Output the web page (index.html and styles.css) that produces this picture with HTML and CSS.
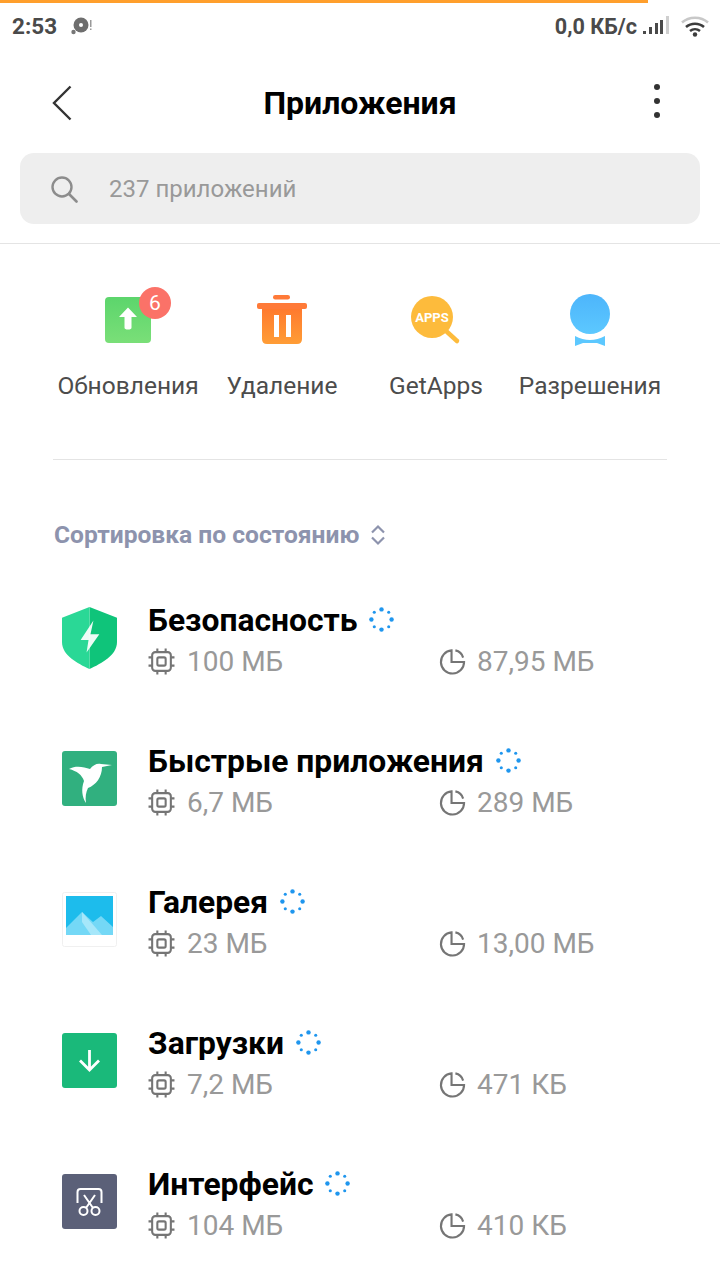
FILE: index.html
```html
<!DOCTYPE html>
<html lang="ru">
<head>
    <meta charset="UTF-8">
    <title>Приложения</title>
    <link rel="stylesheet" href="styles.css">
</head>
<body>
    <svg class="defs" width="0" height="0">
        <symbol id="chip" viewBox="0 0 26 26">
            <g fill="none" stroke="#757575" stroke-width="2">
                <rect x="4" y="4" width="18" height="18" rx="3"/>
                <rect x="9" y="9" width="8" height="8" rx="1.5"/>
                <path d="M9 0.5V4M17 0.5V4M9 22V25.500M17 22V25.500M0.500 9H4M0.500 17H4M22 9H25.500M22 17H25.500"/>
            </g>
        </symbol>
        <symbol id="pie" viewBox="0 0 28 28">
            <path d="M13 2.500A12 12 0 1 0 26 14.500H13Z M17 2.500A10.500 10.500 0 0 1 25 10" fill="none" stroke="#757575" stroke-width="2.200"/>
        </symbol>
        <symbol id="spinner" viewBox="0 0 26 26">
            <g fill="#1f96ee">
                <circle cx="13" cy="2.500" r="2.300"/>
                <circle cx="20.500" cy="5.500" r="1.600"/>
                <circle cx="23.500" cy="13" r="2.300"/>
                <circle cx="20.500" cy="20.500" r="1.600"/>
                <circle cx="13" cy="23.500" r="2.300"/>
                <circle cx="5.500" cy="20.500" r="1.600"/>
                <circle cx="2.500" cy="13" r="2.300"/>
                <circle cx="5.500" cy="5.500" r="1.600"/>
            </g>
        </symbol>
    </svg>

    <div class="progress"></div>

    <div class="statusbar">
        <div class="status-left">
            <span class="clock">2:53</span>
            <svg width="24" height="22" viewBox="0 0 24 22">
                <circle cx="11" cy="10" r="7.500" fill="#6e6e6e"/>
                <circle cx="11" cy="10" r="2" fill="#fff"/>
                <circle cx="3.500" cy="17" r="2.200" fill="#777"/>
                <rect x="20" y="5" width="1.500" height="7" fill="#999"/>
                <rect x="20" y="13.500" width="1.500" height="1.500" fill="#999"/>
            </svg>
        </div>
        <div class="status-right">
            <span class="speed">0,0 КБ/с</span>
            <svg class="signal" width="26" height="20" viewBox="0 0 26 20">
                <rect x="0" y="15" width="3" height="3" fill="#4a4a4a"/>
                <rect x="6" y="11" width="3" height="7" fill="#4a4a4a"/>
                <rect x="12" y="7" width="3" height="11" fill="#4a4a4a"/>
                <rect x="17" y="4" width="3" height="14" fill="#4a4a4a"/>
                <rect x="23" y="0" width="3" height="18" fill="#cfcfcf"/>
            </svg>
            <svg class="wifi" width="28" height="22" viewBox="0 0 28 22">
                <path d="M1 7.500C8 1 20 1 27 7.500" fill="none" stroke="#c8c8c8" stroke-width="2.500"/>
                <path d="M5 12C10 7.500 18 7.500 23 12" fill="none" stroke="#3c3c3c" stroke-width="2.500"/>
                <path d="M9 16C12 13.500 16 13.500 19 16" fill="none" stroke="#3c3c3c" stroke-width="2.500"/>
                <circle cx="14" cy="19.500" r="2.200" fill="#3c3c3c"/>
            </svg>
        </div>
    </div>

    <header class="titlebar">
        <svg class="back" width="20" height="36" viewBox="0 0 20 36">
            <path d="M18.500 1.500L2 18L18.500 34.500" fill="none" stroke="#333" stroke-width="2.400"/>
        </svg>
        <h1>Приложения</h1>
        <div class="more"><i></i><i></i><i></i></div>
    </header>

    <div class="search">
        <svg width="28" height="28" viewBox="0 0 28 28">
            <circle cx="12" cy="12" r="9.500" fill="none" stroke="#8c8c8c" stroke-width="2.400"/>
            <path d="M19 19L26.500 26.500" stroke="#8c8c8c" stroke-width="2.600" stroke-linecap="round"/>
        </svg>
        <span>237 приложений</span>
    </div>

    <nav class="actions">
        <div class="action">
            <div class="action-icon">
                <svg width="48" height="48" viewBox="0 0 48 48">
                    <defs>
                        <linearGradient id="gUp" x1="0" y1="0" x2="0" y2="1"><stop offset="0" stop-color="#5cd56c"/><stop offset="1" stop-color="#7adf78"/></linearGradient>
                    </defs>
                    <rect x="1" y="1" width="46" height="46" rx="4" fill="url(#gUp)"/>
                    <path d="M24 11.500L33 21H27.500V31.500Q27.500 33.500 24 33.500Q20.500 33.500 20.500 31.500V21H15Z" fill="#fff"/>
                </svg>
                <span class="badge">6</span>
            </div>
            <span class="action-label">Обновления</span>
        </div>
        <div class="action">
            <div class="action-icon">
                <svg width="50" height="50" viewBox="0 0 50 50">
                    <defs>
                        <linearGradient id="gBin" x1="0" y1="0" x2="0" y2="1"><stop offset="0" stop-color="#ff7a2e"/><stop offset="1" stop-color="#ff9d36"/></linearGradient>
                    </defs>
                    <rect x="16" y="0" width="17" height="4.500" rx="2.200" fill="#ff7a38"/>
                    <rect x="0" y="8" width="50" height="6" rx="2" fill="#ff7a38"/>
                    <path d="M5 14H45V44Q45 49 40 49H10Q5 49 5 44Z" fill="url(#gBin)"/>
                    <rect x="17" y="20" width="5" height="22" fill="#fff"/>
                    <rect x="29" y="20" width="5" height="22" fill="#fff"/>
                </svg>
            </div>
            <span class="action-label">Удаление</span>
        </div>
        <div class="action">
            <div class="action-icon">
                <svg width="50" height="50" viewBox="0 0 50 50">
                    <path d="M34 35L46 46" stroke="#fdbb3c" stroke-width="4.500" stroke-linecap="round"/>
                    <circle cx="21" cy="22" r="21" fill="#fdbb3c"/>
                    <text class="apps" x="21" y="27">APPS</text>
                </svg>
            </div>
            <span class="action-label">GetApps</span>
        </div>
        <div class="action">
            <div class="action-icon">
                <svg width="42" height="52" viewBox="0 0 42 52">
                    <defs>
                        <linearGradient id="gPerm" x1="0" y1="0" x2="0" y2="1"><stop offset="0" stop-color="#4db5fb"/><stop offset="1" stop-color="#5cc8ff"/></linearGradient>
                    </defs>
                    <circle cx="21" cy="20" r="20" fill="url(#gPerm)"/>
                    <path d="M6 42Q21 50 36 42V52L28 49H14L6 52Z" fill="#5cc8ff"/>
                </svg>
            </div>
            <span class="action-label">Разрешения</span>
        </div>
    </nav>

    <div class="sort">
        <span>Сортировка по состоянию</span>
        <svg width="16" height="22" viewBox="0 0 16 22">
            <path d="M2 8.500L8 2.500L14 8.500M2 13.500L8 19.500L14 13.500" fill="none" stroke="#8d93ad" stroke-width="2.200"/>
        </svg>
    </div>

    <ul class="apps-list">
        <li class="app">
            <svg class="app-icon" width="55" height="62" viewBox="0 0 56 64" preserveAspectRatio="none">
                <path d="M28 0L56 11V36C56 50 40 58 28 64Z" fill="#0fc47a"/>
                <path d="M28 0L0 11V36C0 50 16 58 28 64Z" fill="#2ad896"/>
                <path d="M32 14L19 34H27L25 47L38 28H29Z" fill="#fff" opacity=".92"/>
            </svg>
            <div class="app-body">
                <div class="app-name"><span>Безопасность</span><svg width="25" height="25"><use href="#spinner"/></svg></div>
                <div class="app-stats">
                    <div class="stat"><svg width="27" height="27"><use href="#chip"/></svg><span>100 МБ</span></div>
                    <div class="stat"><svg width="27" height="27"><use href="#pie"/></svg><span>87,95 МБ</span></div>
                </div>
            </div>
        </li>
        <li class="app">
            <svg class="app-icon" width="55" height="55" viewBox="0 0 55 55">
                <rect width="55" height="55" rx="3" fill="#31b07f"/>
                <path d="M7 18C14 14 22 16 28 18C31 14 35 12 39 13L50 14L40 16C40 26 34 34 26 37C24 41 23 46 24 52C20 46 19 38 22 30C20 24 15 20 7 18Z" fill="#fff"/>
            </svg>
            <div class="app-body">
                <div class="app-name"><span>Быстрые приложения</span><svg width="25" height="25"><use href="#spinner"/></svg></div>
                <div class="app-stats">
                    <div class="stat"><svg width="27" height="27"><use href="#chip"/></svg><span>6,7 МБ</span></div>
                    <div class="stat"><svg width="27" height="27"><use href="#pie"/></svg><span>289 МБ</span></div>
                </div>
            </div>
        </li>
        <li class="app">
            <svg class="app-icon" width="55" height="55" viewBox="0 0 55 55">
                <rect x=".5" y=".5" width="54" height="54" rx="2" fill="#fff" stroke="#f0f0f0"/>
                <rect x="4" y="4" width="47" height="39" fill="#1dbcec"/>
                <path d="M4 43V36L20 20L31 30L39 24L51 35V43Z" fill="#74d8f6"/>
                <path d="M20 20L40 43H29L20 30Z" fill="#a6e7fa"/>
            </svg>
            <div class="app-body">
                <div class="app-name"><span>Галерея</span><svg width="25" height="25"><use href="#spinner"/></svg></div>
                <div class="app-stats">
                    <div class="stat"><svg width="27" height="27"><use href="#chip"/></svg><span>23 МБ</span></div>
                    <div class="stat"><svg width="27" height="27"><use href="#pie"/></svg><span>13,00 МБ</span></div>
                </div>
            </div>
        </li>
        <li class="app">
            <svg class="app-icon" width="55" height="55" viewBox="0 0 55 55">
                <rect width="55" height="55" rx="3" fill="#1ab97a"/>
                <path d="M27.500 17V36M18 27.500L27.500 37L37 27.500" fill="none" stroke="#fff" stroke-width="2.800"/>
            </svg>
            <div class="app-body">
                <div class="app-name"><span>Загрузки</span><svg width="25" height="25"><use href="#spinner"/></svg></div>
                <div class="app-stats">
                    <div class="stat"><svg width="27" height="27"><use href="#chip"/></svg><span>7,2 МБ</span></div>
                    <div class="stat"><svg width="27" height="27"><use href="#pie"/></svg><span>471 КБ</span></div>
                </div>
            </div>
        </li>
        <li class="app">
            <svg class="app-icon" width="55" height="55" viewBox="0 0 55 55">
                <rect width="55" height="55" rx="3" fill="#5b6078"/>
                <g fill="none" stroke="#fff" stroke-width="2">
                    <path d="M15.500 29V18Q15.500 15 18.500 15H36.500Q39.500 15 39.500 18V29"/>
                    <circle cx="21.500" cy="37" r="4"/>
                    <circle cx="33.500" cy="37" r="4"/>
                    <path d="M24 34L33 21M31 34L22 21"/>
                </g>
            </svg>
            <div class="app-body">
                <div class="app-name"><span>Интерфейс</span><svg width="25" height="25"><use href="#spinner"/></svg></div>
                <div class="app-stats">
                    <div class="stat"><svg width="27" height="27"><use href="#chip"/></svg><span>104 МБ</span></div>
                    <div class="stat"><svg width="27" height="27"><use href="#pie"/></svg><span>410 КБ</span></div>
                </div>
            </div>
        </li>
    </ul>
</body>
</html>
```

FILE: styles.css
```css
* {
    margin: 0;
    padding: 0;
    box-sizing: border-box;
    font-family: Roboto, "Liberation Sans", sans-serif;
}

html, body {
    height: 1280px;
    overflow: hidden;
}

body {
    background: #fff;
    color: #000;
}

.defs {
    display: block;
    height: 0;
}

svg {
    display: block;
    flex-shrink: 0;
}

.progress {
    width: 648px;
    height: 3px;
    background: #ff9f2c;
}

.statusbar {
    height: 49px;
    display: flex;
    justify-content: space-between;
    align-items: center;
    padding: 0 12px 3px;
    color: #4a4a4a;
    font-size: 22.500px;
    font-weight: 700;
}

.status-left {
    display: flex;
    align-items: center;
    gap: 13px;
}

.status-right {
    display: flex;
    align-items: center;
}

.speed {
    font-size: 21.600px;
}

.signal {
    margin-left: 6px;
}

.wifi {
    margin-left: 12px;
    margin-right: -1px;
}

.titlebar {
    height: 101px;
    display: flex;
    align-items: center;
    justify-content: space-between;
    padding: 0 60px 0 52px;
}

.titlebar h1 {
    font-size: 32px;
    font-weight: 700;
    margin-right: 6px;
}

.more {
    display: flex;
    flex-direction: column;
    gap: 8px;
    margin-top: -3px;
}

.more i {
    display: block;
    width: 6px;
    height: 6px;
    border-radius: 50%;
    background: #333;
}

.search {
    margin: 0 20px;
    height: 71px;
    background: #eee;
    border-radius: 14px;
    display: flex;
    align-items: center;
    gap: 31px;
    padding-left: 30px;
    color: #999;
    font-size: 24px;
}

.search span {
    margin-top: 1px;
}

.actions {
    margin-top: 19px;
    border-top: 1px solid #e4e4e4;
    padding: 50px 51px 0 51px;
    display: grid;
    grid-template-columns: repeat(4, 154px);
}

.action {
    display: flex;
    flex-direction: column;
    align-items: center;
}

.action-icon {
    position: relative;
    height: 52px;
    display: flex;
    align-items: center;
    justify-content: center;
}

.badge {
    position: absolute;
    top: -7px;
    right: -19px;
    width: 32px;
    height: 32px;
    border-radius: 50%;
    background: #fb7268;
    color: #fff;
    font-size: 21px;
    line-height: 32px;
    text-align: center;
}

.apps {
    fill: #fff;
    font-size: 13px;
    font-weight: 700;
    text-anchor: middle;
}

.action-label {
    margin-top: 24px;
    font-size: 24.500px;
    line-height: 32px;
    color: #4c4c4c;
    white-space: nowrap;
}

.sort {
    margin: 57px 53px 0;
    border-top: 1px solid #e4e4e4;
    padding: 60px 0 0 1px;
    display: flex;
    align-items: center;
    gap: 11px;
    color: #8d93ad;
    font-size: 24.600px;
    font-weight: 700;
    line-height: 30px;
}

.apps-list {
    list-style: none;
    margin-top: 20px;
}

.app {
    height: 141px;
    display: flex;
    align-items: center;
    padding-left: 62px;
}

.app-icon {
    margin-top: -6px;
}

.app-body {
    margin-left: 31px;
    flex: 1;
}

.app-name {
    display: flex;
    align-items: center;
    gap: 12px;
    font-size: 31.800px;
    font-weight: 700;
    line-height: 40px;
}

.app-stats {
    display: grid;
    grid-template-columns: 291px 1fr;
    margin-top: 2px;
}

.stat {
    display: flex;
    align-items: center;
    gap: 12px;
    font-size: 28px;
    line-height: 40px;
    color: #999;
}

.stat + .stat {
    gap: 11px;
}
```
